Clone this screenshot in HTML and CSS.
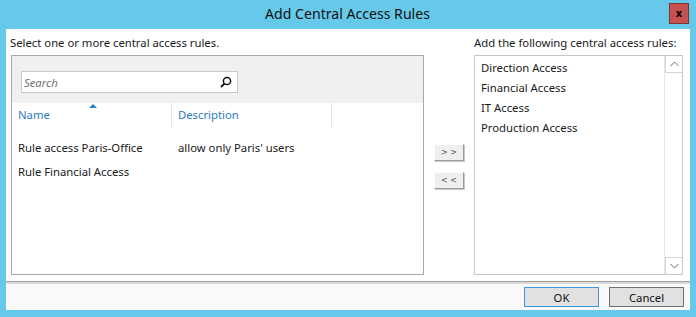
FILE: index.html
```html
<html>
    <head>
        <title>Add Central Access Rules</title>
        <link rel="stylesheet" href="styles.css">
    </head>
    <body>
        <div class="window">
            <div class="titleBar">
                <span></span>
                <div class="title">Add Central Access Rules</div>
                <button class="closeButton">x</button>
            </div>
            <div class="content">
                <div class="main">
                    <div class="heading">Select one or more central access rules.</div>
                    <div class="heading headingRight">Add the following central access rules:</div>

                    <div class="rulePanel">
                        <div class="toolbar">
                            <div class="searchBox">
                                <span class="searchText">Search</span>
                                <svg class="searchIcon" width="12" height="12" viewBox="0 0 12 12">
                                    <circle cx="7" cy="5" r="3.6" fill="none" stroke="#111" stroke-width="1.5"/>
                                    <line x1="4.4" y1="7.6" x2="1" y2="11" stroke="#111" stroke-width="1.8"/>
                                </svg>
                            </div>
                        </div>
                        <div class="columnHeader">
                            <div class="column colName">Name<span class="sortArrow"></span></div>
                            <div class="column colDesc">Description</div>
                            <div class="column colRest"></div>
                        </div>
                        <div class="ruleRows">
                            <div class="ruleRow">
                                <div class="column colName">Rule access Paris-Office</div>
                                <div class="column colDesc">allow only Paris' users</div>
                            </div>
                            <div class="ruleRow">
                                <div class="column colName">Rule Financial Access</div>
                                <div class="column colDesc"></div>
                            </div>
                        </div>
                    </div>

                    <div class="moveButtons">
                        <button class="moveButton">&gt; &gt;</button>
                        <button class="moveButton">&lt; &lt;</button>
                    </div>

                    <div class="selectedPanel">
                        <div class="selectedList">
                            <div class="selectedItem">Direction Access</div>
                            <div class="selectedItem">Financial Access</div>
                            <div class="selectedItem">IT Access</div>
                            <div class="selectedItem">Production Access</div>
                        </div>
                        <div class="scrollBar">
                            <div class="scrollArrow">
                                <svg width="9" height="6" viewBox="0 0 9 6"><polyline points="0.5,5 4.5,1 8.5,5" fill="none" stroke="#6a6a6a" stroke-width="1"/></svg>
                            </div>
                            <div class="scrollTrack"></div>
                            <div class="scrollArrow scrollArrowDown">
                                <svg width="9" height="6" viewBox="0 0 9 6"><polyline points="0.5,1 4.5,5 8.5,1" fill="none" stroke="#6a6a6a" stroke-width="1"/></svg>
                            </div>
                        </div>
                    </div>
                </div>
                <div class="footer">
                    <button class="dialogButton okButton">OK</button>
                    <button class="dialogButton">Cancel</button>
                </div>
            </div>
        </div>
    </body>
</html>
```

FILE: styles.css
```css
body
{
    margin: 0;
    padding: 0;
    font-family: "Noto Sans", "Open Sans", sans-serif;
    font-size: 11.3px;
    color: #1a1a1a;
}
.window
{
    width: 696px;
    height: 317px;
    box-sizing: border-box;
    background-color: #66c9ea;
    padding: 0 6px 7px 6px;
    display: flex;
    flex-direction: column;
}
.titleBar
{
    height: 29px;
    display: grid;
    grid-template-columns: 1fr auto 1fr;
    padding-right: 1px;
}
.title
{
    font-size: 14.1px;
    line-height: 28px;
    color: #111;
}
.closeButton
{
    justify-self: end;
    margin-top: 3px;
    width: 20px;
    height: 21px;
    padding: 0;
    background-color: #c75050;
    border: 1px solid #7f3434;
    font-family: "DejaVu Sans", sans-serif;
    font-weight: bold;
    font-size: 10px;
    line-height: 16px;
    color: #000;
}
.content
{
    flex: 1;
    background-color: #fff;
    display: flex;
    flex-direction: column;
}
.main
{
    flex: 1;
    display: grid;
    grid-template-columns: 413px 50px 209px;
    grid-template-rows: 26px 1fr;
    padding: 0 7px 6px 5px;
}
.heading
{
    line-height: 16px;
    padding-top: 6px;
    margin-left: -1px;
    white-space: nowrap;
}
.headingRight
{
    grid-column: 3;
    margin-left: 0;
}
.rulePanel
{
    border: 1px solid #a9a9a9;
    display: flex;
    flex-direction: column;
}
.toolbar
{
    height: 47px;
    box-sizing: border-box;
    background-color: #f0f0f0;
    padding: 15px 0 0 9px;
}
.searchBox
{
    width: 217px;
    height: 22px;
    box-sizing: border-box;
    border: 1px solid #c9c9c9;
    background-color: #fff;
    display: flex;
    align-items: center;
    justify-content: space-between;
    padding: 0 5px 0 2px;
}
.searchText
{
    font-style: italic;
    color: #707070;
}
.columnHeader
{
    display: flex;
    height: 24px;
    color: #2f7bc4;
}
.column
{
    box-sizing: border-box;
    padding-left: 6px;
    line-height: 24px;
    white-space: nowrap;
}
.colName
{
    width: 160px;
    position: relative;
}
.colDesc
{
    width: 160px;
}
.columnHeader .colName, .columnHeader .colDesc
{
    border-right: 1px solid #e3e3e3;
}
.sortArrow
{
    position: absolute;
    top: 1px;
    left: 77px;
    border-left: 4px solid transparent;
    border-right: 4px solid transparent;
    border-bottom: 4px solid #2f7bc4;
}
.ruleRows
{
    padding-top: 9px;
}
.ruleRow
{
    display: flex;
}
.moveButtons
{
    display: flex;
    flex-direction: column;
    align-items: center;
    gap: 11px;
    padding-top: 89px;
}
.moveButton
{
    width: 30px;
    height: 17px;
    padding: 0;
    background-color: #efefef;
    border: 1px solid;
    border-color: #fdfdfd #9c9c9c #9c9c9c #fdfdfd;
    box-shadow: 1px 1px 0 #c8c8c8;
    font-family: "DejaVu Sans", sans-serif;
    font-size: 8px;
    color: #555;
}
.selectedPanel
{
    border: 1px solid #c6c6c6;
    display: flex;
}
.selectedList
{
    flex: 1;
    padding-top: 2px;
}
.selectedItem
{
    line-height: 20px;
    padding-left: 6px;
}
.scrollBar
{
    width: 17px;
    border-left: 1px solid #e6e6e6;
    display: flex;
    flex-direction: column;
}
.scrollArrow
{
    height: 17px;
    box-sizing: border-box;
    border: 1px solid #d4d4d4;
    border-top: none;
    border-right: none;
    display: flex;
    align-items: center;
    justify-content: center;
}
.scrollArrowDown
{
    border-bottom: none;
    border-top: 1px solid #d4d4d4;
}
.scrollTrack
{
    flex: 1;
}
.footer
{
    height: 29px;
    box-sizing: border-box;
    border-top: 1px solid #a0a0a0;
    box-shadow: inset 0 2px 0 #d9d9d9;
    background-color: #f9f9f9;
    display: flex;
    justify-content: flex-end;
    gap: 10px;
    padding: 5px 6px 0 0;
}
.dialogButton
{
    width: 75px;
    height: 20px;
    padding: 0;
    background-color: #e1e1e1;
    border: 1px solid #707070;
    font-family: "Noto Sans", "Open Sans", sans-serif;
    font-size: 11.3px;
    color: #111;
}
.okButton
{
    border-color: #3d94e0;
}
```
